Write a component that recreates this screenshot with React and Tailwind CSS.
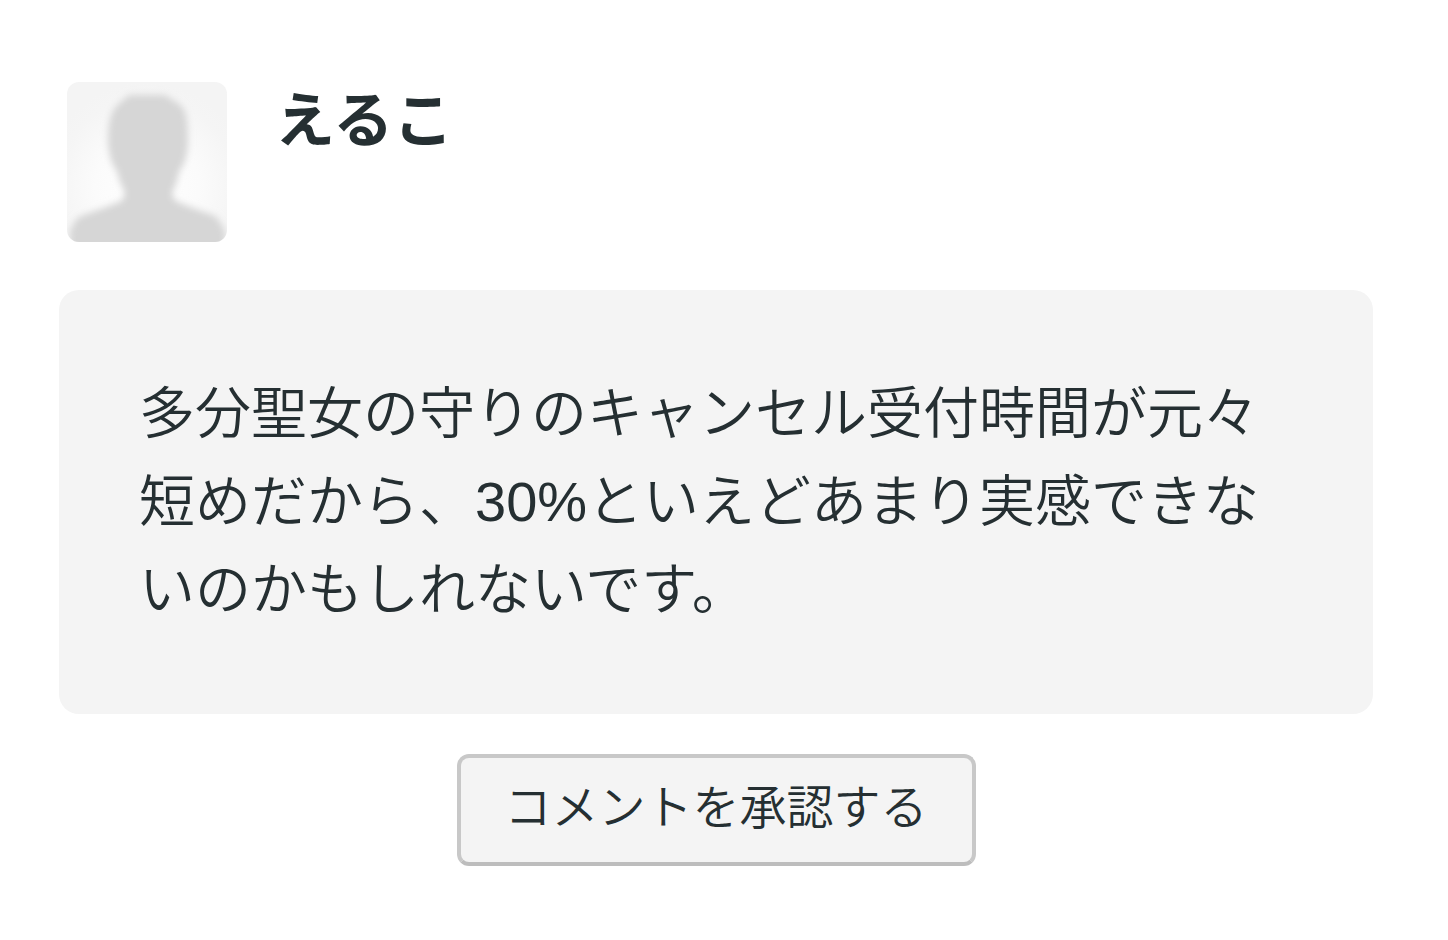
import React from "react";

const comment = {
  author: "えるこ",
  body: "多分聖女の守りのキャンセル受付時間が元々短めだから、30%といえどあまり実感できないのかもしれないです。",
};

const Avatar = () => (
  <svg
    viewBox="0 0 160 160"
    aria-hidden="true"
    className="size-40 shrink-0 rounded-xl"
  >
    <defs>
      <radialGradient id="avatarBg" cx="50%" cy="65%" r="65%">
        <stop offset="0%" stopColor="#ffffff" />
        <stop offset="50%" stopColor="#fbfbfb" />
        <stop offset="85%" stopColor="#f5f5f5" />
        <stop offset="100%" stopColor="#f4f4f4" />
      </radialGradient>
      <filter id="avatarBlur" x="-20%" y="-20%" width="140%" height="140%">
        <feGaussianBlur stdDeviation="3.5" />
      </filter>
    </defs>
    <rect width="160" height="160" fill="url(#avatarBg)" />
    <path
      filter="url(#avatarBlur)"
      fill="#d6d6d6"
      d="M62 13L98 13C104 18 114 20 118 30C121 38 121 52 121 62C120 74 118 82 113 88C110 94 111 100 107 106C104 112 105 117 111 120C122 125 138 130 148 134C153 138 155 144 158 149V180H3V149C6 143 8 137 14 134C27 129 43 124 54 119C59 115 58 109 55 104C51 98 52 92 49 88C44 81 42 72 41 62C41 52 41 40 45 31C49 22 57 18 62 13Z"
    />
  </svg>
);

const App = () => {
  return (
    <main className="min-h-screen bg-white pt-[82px] pr-[75px] pb-[75px] pl-[59px] font-['Liberation_Sans','Noto_Sans_CJK_JP',sans-serif] text-[#252f32]">
      <article lang="ja">
        {/* Author */}
        <header className="flex items-start gap-12 px-2">
          <Avatar />
          <h2 className="text-[60px] leading-[80px] font-bold">
            {comment.author}
          </h2>
        </header>

        {/* Body */}
        <div className="mt-12 rounded-[20px] bg-[#f4f4f4] p-20">
          <p className="text-[56px] leading-[88px] font-[350]">
            {comment.body}
          </p>
        </div>

        {/* Approve */}
        <div className="mt-10 flex justify-center">
          <button
            type="button"
            className="rounded-xl border-4 border-[#c8c8c8] border-b-[#bdbdbd] bg-[#f4f4f4] px-11 pt-4 pb-5 text-[47px] leading-[68px] font-[350]"
          >
            コメントを承認する
          </button>
        </div>
      </article>
    </main>
  );
};

export default App;
